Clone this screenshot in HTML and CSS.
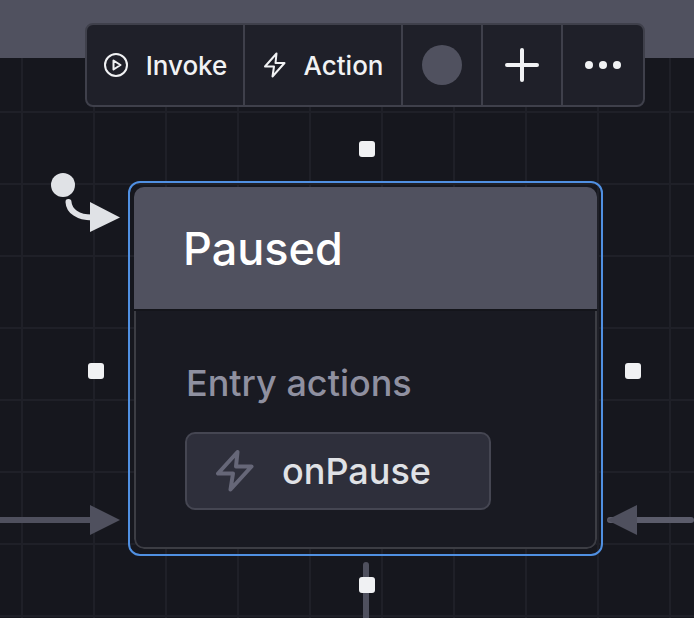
FILE: index.html
```html
<!DOCTYPE html>
<html lang="en">
<head>
<meta charset="utf-8">
<title>Paused state</title>
<link rel="stylesheet" href="styles.css">
</head>
<body>
<main class="canvas">
  <div class="parent-header"></div>

  <nav class="toolbar">
    <button class="tool tool-invoke">
      <svg class="tool-icon" viewBox="0 0 26 26" width="26" height="26"><circle cx="13" cy="13" r="11" fill="none" stroke="#f1f2f4" stroke-width="2"/><path d="M10.500 8.500 17.500 13 10.500 17.500Z" fill="none" stroke="#f1f2f4" stroke-width="2" stroke-linejoin="round"/></svg>
      <span>Invoke</span>
    </button>
    <button class="tool tool-action">
      <svg class="tool-icon" viewBox="0 0 24 26" width="24" height="26"><path d="M13.500 1.500 2 14.500H11L9.500 24.500 21.500 11H12.500Z" fill="none" stroke="#f1f2f4" stroke-width="2" stroke-linejoin="round"/></svg>
      <span>Action</span>
    </button>
    <button class="tool tool-square"><span class="swatch"></span></button>
    <button class="tool tool-square">
      <svg viewBox="0 0 34 34" width="34" height="34"><path d="M17 2V32M2 17H32" stroke="#f1f2f4" stroke-width="4" stroke-linecap="round"/></svg>
    </button>
    <button class="tool tool-square">
      <svg viewBox="0 0 38 10" width="38" height="10"><circle cx="5" cy="5" r="4" fill="#f1f2f4"/><circle cx="19" cy="5" r="4" fill="#f1f2f4"/><circle cx="33" cy="5" r="4" fill="#f1f2f4"/></svg>
    </button>
  </nav>

  <span class="handle handle-top"></span>
  <span class="handle handle-left"></span>
  <span class="handle handle-right"></span>
  <span class="edge-stub"></span>
  <span class="handle handle-bottom"></span>

  <svg class="initial" viewBox="0 0 72 62" width="72" height="62">
    <circle cx="13" cy="13" r="12" fill="#e0e2e6"/>
    <path d="M18.500 30C19 39 28 45.500 42 45.500" fill="none" stroke="#e0e2e6" stroke-width="6" stroke-linecap="round"/>
    <path d="M40 30 70 45.500 40 60Z" fill="#e0e2e6"/>
  </svg>

  <svg class="arrow arrow-left" viewBox="0 0 120 32" width="120" height="32">
    <rect y="13" width="92" height="6" fill="#4f505e"/>
    <path d="M90 1 120 16 90 31Z" fill="#4f505e"/>
  </svg>
  <svg class="arrow arrow-right" viewBox="0 0 90 32" width="90" height="32">
    <rect x="3" y="13" width="87" height="6" rx="3" fill="#5b5c6b"/>
    <path d="M33 1 3 16 33 31Z" fill="#4f505e"/>
  </svg>

  <section class="node">
    <div class="node-inner">
      <header class="node-header"><h1>Paused</h1></header>
      <div class="node-body">
        <h2>Entry actions</h2>
        <div class="pill">
          <svg viewBox="0 0 38 42" width="38" height="42"><path d="M21.500 2 2 23.500H17L14.500 39.500 35.500 16.500H20Z" fill="none" stroke="#666778" stroke-width="4" stroke-linejoin="round"/></svg>
          <span>onPause</span>
        </div>
      </div>
    </div>
  </section>
</main>
</body>
</html>
```
FILE: styles.css
```css
* { box-sizing: border-box; }
html, body { margin: 0; padding: 0; }
body { width: 694px; height: 618px; overflow: hidden; background: #16171e; font-family: Inter, "Liberation Sans", sans-serif; }

.canvas {
  position: relative;
  width: 694px;
  height: 618px;
  overflow: hidden;
  background-color: #16171e;
  background-image:
    linear-gradient(to right, #1f2028 2px, transparent 2px),
    linear-gradient(to bottom, #1f2028 2px, transparent 2px);
  background-size: 72px 72px;
  background-position: 21px 39px;
}

.parent-header { height: 58px; background: #50515f; }

.toolbar {
  position: absolute;
  left: 85px;
  top: 23px;
  display: flex;
  height: 84px;
  background: #1f2029;
  border: 2px solid #3f404b;
  border-radius: 8px;
}
.tool {
  display: flex;
  align-items: center;
  justify-content: center;
  height: 100%;
  padding: 0;
  border: 0;
  border-right: 2px solid #3f404b;
  background: none;
  color: #f1f2f4;
  font: 550 26px Inter, "Liberation Sans", sans-serif;
}
.tool:last-child { border-right: 0; }
.tool-invoke { width: 158px; gap: 17px; }
.tool-action { width: 158px; gap: 17px; }
.tool-square { width: 80px; }
.tool-icon { flex: none; }
.swatch { width: 40px; height: 40px; border-radius: 50%; background: #50515f; }

.handle {
  position: absolute;
  width: 16px;
  height: 16px;
  border-radius: 3px;
  background: #f0f1f3;
  z-index: 2;
}
.handle-top { left: 359px; top: 141px; }
.handle-left { left: 88px; top: 363px; }
.handle-right { left: 625px; top: 363px; }
.handle-bottom { left: 359px; top: 577px; }
.edge-stub {
  position: absolute;
  left: 363px;
  top: 562px;
  width: 6px;
  height: 56px;
  border-radius: 3px 3px 0 0;
  background: #4f505e;
}

.initial { position: absolute; left: 50px; top: 172px; }
.arrow { position: absolute; top: 504px; }
.arrow-left { left: 0; }
.arrow-right { left: 604px; }

.node {
  position: absolute;
  left: 128px;
  top: 181px;
  width: 475px;
  height: 375px;
  padding: 4px 4px 5px;
  border: 2px solid #5090e2;
  border-radius: 12px;
}
.node-inner {
  display: flex;
  flex-direction: column;
  height: 100%;
  border-radius: 10px;
  overflow: hidden;
  background: #191a22;
}
.node-header {
  display: flex;
  align-items: center;
  flex: none;
  height: 124px;
  padding: 1px 49px 0;
  background: #50515f;
  border-bottom: 2px solid #14151b;
}
.node-header h1 { margin: 0; color: #fff; font-size: 45px; font-weight: 450; line-height: 1; }
.node-body {
  flex: 1;
  padding: 52px 49px 0 49px;
  border: 2px solid #3c3d44;
  border-top: 0;
  border-radius: 0 0 10px 10px;
}
.node-body h2 { margin: 0 0 29px; padding-left: 1px; color: #8f90a0; font-size: 36px; font-weight: 450; line-height: 40px; }
.pill {
  display: flex;
  align-items: center;
  gap: 28px;
  width: 306px;
  height: 78px;
  padding: 0 29px;
  background: #2e2f3b;
  border: 2px solid #454652;
  border-radius: 10px;
  color: #e0e2e6;
  font-size: 36px;
  font-weight: 450;
}
.pill svg { flex: none; }
```
